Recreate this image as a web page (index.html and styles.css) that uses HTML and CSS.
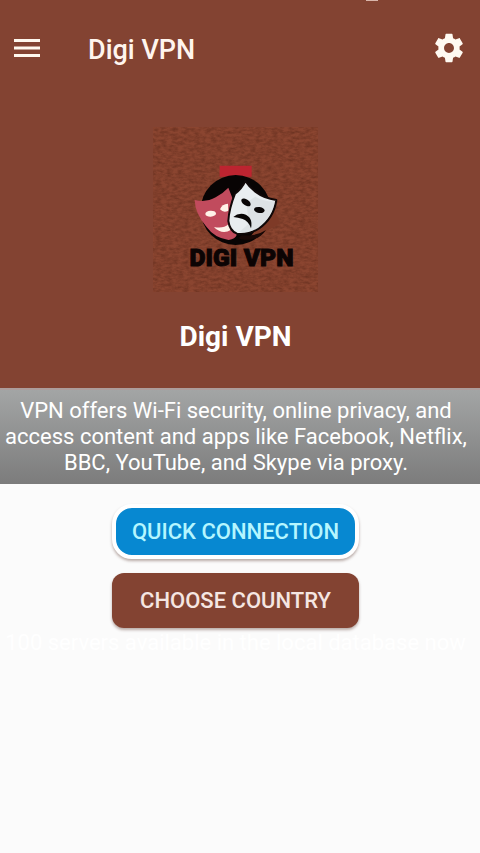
FILE: index.html
```html
<!DOCTYPE html>
<html lang="en">
<head>
    <meta charset="UTF-8">
    <meta name="viewport" content="width=device-width, initial-scale=1.0">
    <title>Digi VPN</title>
    <link rel="stylesheet" href="styles.css">
</head>
<body>

<!-- Top section -->
<header class="hero">
    <div class="notch"></div>
    <div class="toolbar">
        <button class="icon-btn" type="button" aria-label="Menu">
            <svg width="26" height="18" viewBox="0 0 26 18" fill="#fff8ee">
                <path d="M0 0h26v3H0zM0 7.500h26v3H0zM0 15h26v3H0z"/>
            </svg>
        </button>
        <h1 class="toolbar-title">Digi VPN</h1>
        <button class="icon-btn" type="button" aria-label="Settings">
            <svg width="34" height="34" viewBox="0 0 24 24" fill="#fffaf2">
                <path d="M19.430 12.980c.04-.32.070-.64.070-.98s-.03-.66-.07-.98l2.110-1.650c.19-.15.240-.42.120-.64l-2-3.460c-.12-.22-.39-.3-.61-.22l-2.490 1c-.52-.4-1.080-.73-1.690-.98l-.38-2.650A.488.488 0 0 0 14 2h-4c-.25 0-.46.180-.49.420l-.38 2.650c-.61.250-1.170.590-1.690.98l-2.490-1c-.23-.09-.49 0-.61.220l-2 3.460c-.13.220-.07.490.12.640l2.110 1.650c-.04.320-.07.650-.07.980s.03.660.07.980l-2.110 1.650c-.19.150-.24.420-.12.640l2 3.460c.12.220.39.300.61.220l2.490-1c.52.400 1.080.730 1.690.98l.38 2.650c.03.240.24.420.49.420h4c.25 0 .46-.18.490-.42l.38-2.650c.61-.25 1.170-.59 1.690-.98l2.490 1c.23.090.49 0 .61-.22l2-3.460c.12-.22.070-.49-.12-.64l-2.110-1.650zM12 15.500c-1.930 0-3.500-1.570-3.500-3.500s1.570-3.500 3.500-3.500 3.500 1.570 3.500 3.500-1.570 3.500-3.500 3.500z"/>
            </svg>
        </button>
    </div>

    <!-- Logo -->
    <svg class="logo" viewBox="9 21 495 495" role="img" aria-label="Digi VPN logo">
        <defs>
            <filter id="leather" x="0" y="0" width="100%" height="100%" color-interpolation-filters="sRGB">
                <feTurbulence type="fractalNoise" baseFrequency="0.06 0.12" numOctaves="3" seed="4"/>
                <feColorMatrix values="0 0 0 0 0.36  0 0 0 0 0.16  0 0 0 0 0.1  1.1 0 0 0 -0.35"/>
            </filter>
        </defs>
        <rect x="9" y="21" width="495" height="495" fill="#8b4530"/>
        <rect x="9" y="21" width="495" height="495" filter="url(#leather)"/>
        <path d="M209 170V137h96v33z" fill="#bd2430"/>
        <ellipse cx="257" cy="270" rx="105" ry="105" fill="#080404"/>
        <path d="M340 300l30-40 20 50-42 24-50 20z" fill="#7e3a27"/>
        <path d="M276 346q42 4 72-16-16 26-48 29-30 1-34-6z" fill="#180806"/>
        <path d="M134 240q36 8 63-8 22-12 38-29l19 48 6 94q-4 12-24 15-42-5-68-41-33-40-34-79z" fill="#c14b5d"/>
        <ellipse cx="182" cy="281" rx="16" ry="9" fill="#fff2e8" transform="rotate(-3 182 281)"/>
        <path d="M210 268q6-16 24-17l1 21q-14 8-25-4z" fill="#fff2e8"/>
        <path d="M192 321q28 6 43-8 10 0 8 16-18 12-36 3-10-4-15-11z" fill="#fff2e8"/>
        <path d="M286 183q-10 22-31 38-18 45-20 82 4 30 26 38 33 4 65-15 45-31 53-86-37-5-63-25-20-16-30-32z" fill="#e9edf0" stroke="#100808" stroke-width="6" stroke-linejoin="round"/>
        <path d="M316 230q28 16 59 14-8 46-49 79-26 16-58 13l30-26-10-62z" fill="#cbd1d5" opacity=".4"/>
        <ellipse cx="288" cy="247" rx="16" ry="9" fill="#090606" transform="rotate(35 288 247)"/>
        <ellipse cx="328" cy="270" rx="16" ry="9" fill="#090606" transform="rotate(8 328 270)"/>
        <path d="M250 291q13-12 31-9 29 8 22 43-8-23-25-28-14-4-28-6z" fill="#090606"/>
        <text class="logo-text" y="438" text-anchor="middle"><tspan x="190">DIGI</tspan><tspan x="356">VPN</tspan></text>
    </svg>

    <h2 class="hero-title">Digi VPN</h2>
</header>

<!-- Description -->
<p class="description">VPN offers Wi-Fi security, online privacy, and access content and apps like Facebook, Netflix, BBC, YouTube, and Skype via proxy.</p>

<!-- Buttons -->
<main class="actions">
    <button class="btn btn-quick" type="button">QUICK CONNECTION</button>
    <button class="btn btn-country" type="button">CHOOSE COUNTRY</button>
    <p class="servers">100 servers available in the local database now</p>
</main>

</body>
</html>
```
FILE: styles.css
```css
/* Basic styling */
* {
    box-sizing: border-box;
}

body {
    margin: 0;
    min-height: 100vh;
    background-color: #fbfbfb;
    font-family: Roboto, sans-serif;
    color: white;
}

button {
    font-family: inherit;
    border: none;
    cursor: pointer;
}

/* Top section */
.hero {
    display: flex;
    flex-direction: column;
    align-items: center;
    padding-bottom: 33px;
    background-color: #834332;
}

.notch {
    align-self: flex-end;
    width: 12px;
    height: 1px;
    margin-right: 102px;
    background-color: #d9b5aa;
}

.toolbar {
    display: flex;
    align-items: center;
    width: 100%;
    height: 94px;
    padding: 0 14px;
}

.icon-btn {
    display: flex;
    padding: 0;
    background: none;
}

.toolbar-title {
    flex: 1;
    margin: 0;
    padding: 4px 0 0 48px;
    font-size: 27px;
    font-weight: 500;
    line-height: 32px;
    color: #fff5ee;
}

/* Logo */
.logo {
    width: 165px;
    height: 165px;
    margin: 32px 9px 0 0;
}

.logo-text {
    font-family: Roboto, sans-serif;
    font-size: 74px;
    font-weight: 900;
    fill: #0c0404;
    stroke: #0c0404;
    stroke-width: 3px;
}

.hero-title {
    margin: 27px 9px 0 0;
    font-size: 28px;
    font-weight: 700;
    line-height: 36px;
}

/* Description */
.description {
    margin: 0;
    padding: 8px 12px 8px 4px;
    border-top: 2px solid #ad9d9b;
    background: linear-gradient(#a3a5a5, #7c7c7c);
    font-size: 22px;
    line-height: 26px;
    text-align: center;
}

/* Buttons */
.actions {
    display: flex;
    flex-direction: column;
    align-items: center;
    padding: 20px 9px 0 0;
}

.btn {
    width: 247px;
    height: 55px;
    font-size: 22px;
    font-weight: 500;
    box-shadow: 0 2px 3px rgba(60, 20, 10, 0.35);
}

.btn-quick {
    border: 4px solid white;
    border-radius: 20px;
    background-color: #0788d1;
    color: #b5f6ff;
}

.btn-country {
    margin-top: 14px;
    border-radius: 12px;
    background-color: #834332;
    color: #f5e6e2;
}

.servers {
    margin: 2px 0 0;
    font-size: 22px;
    line-height: 26px;
    text-align: center;
}
```
